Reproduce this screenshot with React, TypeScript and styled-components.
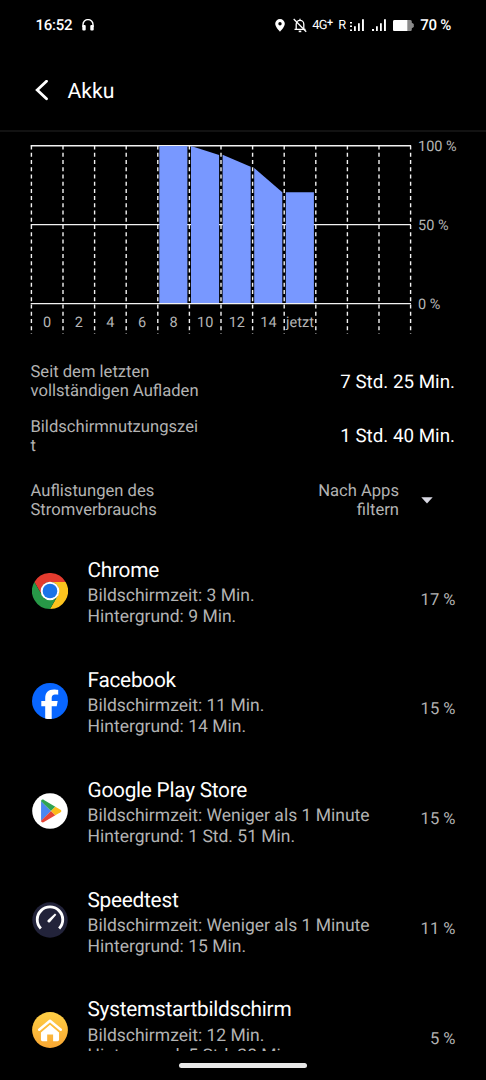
import React from "react";
import styled, { createGlobalStyle } from "styled-components";

const GlobalStyle = createGlobalStyle`
  * {
    box-sizing: border-box;
  }
  body {
    margin: 0;
    background: #000;
  }
  svg {
    display: block;
    flex: none;
  }
`;

const Screen = styled.div`
  display: flex;
  flex-direction: column;
  width: 486px;
  height: 1080px;
  overflow: hidden;
  background: #000;
  color: #fff;
  font-family: Roboto, sans-serif;
  text-rendering: geometricPrecision;
`;

const StatusBar = styled.div`
  display: flex;
  align-items: center;
  justify-content: space-between;
  height: 50px;
  padding: 0 35px 0 35.5px;
  font-size: 15px;
  font-weight: 500;
  letter-spacing: -0.25px;
`;

const StatusGroup = styled.div`
  display: flex;
  align-items: center;
`;

const Gap = styled.span<{ $size: number }>`
  width: ${({ $size }) => $size}px;
`;

const Network = styled.span<{ $width: number }>`
  width: ${({ $width }) => $width}px;
  font-size: 12.8px;
  font-weight: 400;
  letter-spacing: -0.5px;
  white-space: nowrap;
`;

const Plus = styled.span`
  font-size: 11px;
  font-weight: 500;
  line-height: 1;
  vertical-align: 2.5px;
`;

const Header = styled.header`
  display: flex;
  align-items: center;
  gap: 18.5px;
  height: 82px;
  padding: 0 0 0 35px;
  border-bottom: 2px solid #121212;
`;

const Title = styled.h1`
  margin: 0;
  padding-top: 2px;
  font-size: 21.2px;
  font-weight: 400;
`;

const Content = styled.main`
  height: 919px;
  overflow: hidden;
`;

const Chart = styled.svg`
  font-size: 14.5px;
  fill: #b5b5b5;
`;

const Summary = styled.div`
  display: flex;
  align-items: center;
  justify-content: space-between;
  padding: 0 31px 0 30.5px;
  height: 54.6px;
`;

const Label = styled.div<{ $width: number; $right?: boolean }>`
  width: ${({ $width }) => $width}px;
  padding-top: 2px;
  font-size: 16.6px;
  line-height: 19.3px;
  color: #b3b3b3;
  overflow-wrap: anywhere;
  text-align: ${({ $right }) => ($right ? "right" : "left")};
`;

const Value = styled.div`
  padding-top: 1px;
  font-size: 18.8px;
  line-height: 22px;
`;

const FilterBar = styled.div`
  display: flex;
  align-items: center;
  height: 54px;
  padding: 0 31px 0 30.5px;
  margin: 10px 0 9px;
`;

const Filter = styled.div`
  display: flex;
  align-items: center;
  gap: 22px;
  margin-left: auto;
  margin-right: 22px;
`;

const AppRow = styled.div`
  display: flex;
  align-items: center;
  height: 109.8px;
  padding: 0 30.5px 0 31.5px;
`;

const AppText = styled.div`
  flex: 1;
  margin-left: 20px;
  padding-top: 4px;
`;

const AppName = styled.div`
  font-size: 20.8px;
  line-height: 26px;
  margin-bottom: 2.2px;
  letter-spacing: -0.25px;
`;

const Detail = styled.div`
  font-size: 17.5px;
  line-height: 20.8px;
  color: #b3b3b3;
`;

const Percent = styled.div`
  font-size: 16.6px;
  line-height: 20px;
  color: #b3b3b3;
  margin-top: 19px;
`;

const NavArea = styled.div`
  display: flex;
  justify-content: center;
  padding-top: 12px;
`;

const NavHandle = styled.div`
  width: 128px;
  height: 5px;
  border-radius: 3px;
  background: #e8e8e8;
`;

const ChromeIcon = () => (
  <svg width="36" height="36" viewBox="0 0 48 48">
    <path d="M3.2 12A24 24 0 0 1 44.8 12H24A12 12 0 0 0 13.6 30Z" fill="#e33b2e" />
    <path d="M44.8 12A24 24 0 0 1 24 48L34.4 30A12 12 0 0 0 24 12Z" fill="#fcc31e" />
    <path d="M24 48A24 24 0 0 1 3.2 12L13.6 30A12 12 0 0 0 34.4 30Z" fill="#279847" />
    <circle cx="24" cy="24" r="12.4" fill="#fff" />
    <circle cx="24" cy="24" r="9.8" fill="#1a73e8" />
  </svg>
);

const FacebookIcon = () => (
  <svg width="36" height="36" viewBox="0 0 36 36">
    <circle cx="18" cy="18" r="18" fill="#0866ff" />
    <path
      d="M13.2 35.5V23.2H9.3V17.9h3.9v-2.6c0-6.1 3-8.9 8.8-8.9 1.3 0 3.1.2 4.2.5v4.8c-.5 0-1.3-.1-2.3-.1-3.3 0-4.2 1.2-4.2 4v2.3h6l-1 5.3h-5v12.7c-1.7.2-4.8.1-6.5-.4Z"
      fill="#fff"
    />
  </svg>
);

const PlayIcon = () => (
  <svg width="36" height="36" viewBox="0 0 37 37">
    <circle cx="18.5" cy="18.5" r="18.3" fill="#fff" />
    <path d="M9.3 8.2V28.8L19.6 18.5Z" fill="#4b87f0" />
    <path d="M9.3 8.5C9.3 7 11 6.4 12.3 7.1L24 14.1L19.6 18.5Z" fill="#30a352" />
    <path d="M9.3 28.5C9.3 30 11 30.6 12.3 29.9L24 22.9L19.6 18.5Z" fill="#e64435" />
    <path d="M24 14.1L29.3 17.2C30.4 17.9 30.4 19.1 29.3 19.8L24 22.9L19.6 18.5Z" fill="#fbbc1a" />
  </svg>
);

const SpeedtestIcon = () => (
  <svg width="36" height="36" viewBox="0 0 37 37">
    <circle cx="18.5" cy="18.5" r="18.2" fill="#22233a" />
    <path d="M9.1 27.3A13.1 13.1 0 1 1 27.9 27.3" fill="none" stroke="#fff" strokeWidth="2.9" />
    <path d="M16.3 18.5L23.6 11.7L25 13.1L18.4 20.7Q16.9 21.5 16 20.3Q15.5 19.2 16.3 18.5Z" fill="#fff" />
  </svg>
);

const HomeIcon = () => (
  <svg width="36" height="36" viewBox="0 0 37 37">
    <defs>
      <linearGradient id="home" x1="0" y1="0" x2="0" y2="1">
        <stop offset="0" stopColor="#ffcf45" />
        <stop offset="1" stopColor="#f9a733" />
      </linearGradient>
    </defs>
    <circle cx="18.5" cy="18.5" r="18.4" fill="url(#home)" />
    <path d="M7.4 18.2L18.5 9L29.6 18.2" fill="none" stroke="#fff" strokeWidth="2.6" strokeLinecap="round" strokeLinejoin="round" />
    <path d="M9.2 21L18.5 13.2L27.8 21V28.5Q27.8 30 26.3 30H21.7V23H15.6V30H10.7Q9.2 30 9.2 28.5Z" fill="#fff" />
    <path d="M8.8 20.2L18.5 12.2L28.2 20.2" fill="none" stroke="#fdbb3c" strokeWidth="0.9" />
  </svg>
);

const HeadphonesIcon = () => (
  <svg width="12" height="13" viewBox="0 0 12 13">
    <path d="M1 8V5.6a5 5 0 0 1 10 0v2.4" fill="none" stroke="#fff" strokeWidth="1.4" />
    <rect x="0.3" y="5.9" width="3.4" height="5.7" rx="1" fill="#fff" />
    <rect x="8.3" y="5.9" width="3.4" height="5.7" rx="1" fill="#fff" />
  </svg>
);

const PinIcon = () => (
  <svg width="10" height="13" viewBox="0 0 10 13">
    <path d="M5 0a4.8 4.8 0 0 0-4.8 4.8C.2 8 5 12.7 5 12.7S9.8 8 9.8 4.8A4.8 4.8 0 0 0 5 0Zm0 6.4a1.7 1.7 0 1 1 0-3.4 1.7 1.7 0 0 1 0 3.4Z" fill="#fff" />
  </svg>
);

const BellOffIcon = () => (
  <svg width="14" height="15" viewBox="0 0 14 15" fill="none" stroke="#fff" strokeWidth="1.3">
    <path d="M3.2 11V6.2A3.8 3.8 0 0 1 10.8 6.2V11M1.5 11.3H12.5M7 0.7V2.5" />
    <path d="M0.7 1L13.2 13.8" />
    <path d="M5.7 13.4H8.3" strokeWidth="1.6" />
  </svg>
);

const SignalIcon = ({ roaming }: { roaming?: boolean }) => (
  <svg width="14" height="13" viewBox="0 0 14 13" fill="#fff">
    {roaming ? (
      <path d="M0 3h2v1.5H0zM0 6.5h2V8H0zM0 10.5h2V12H0z" />
    ) : (
      <path d="M0 10h2v2H0z" />
    )}
    <path d="M4 7.3h1.8V12H4zM8 4.2h1.8V12H8zM12 0.3h1.9V12H12z" />
  </svg>
);

const BatteryIcon = () => (
  <svg width="21" height="11" viewBox="0 0 21 11">
    <path d="M1.5 0H17.5Q18.8 0 18.8 1.5V2.7L20.8 4V7L18.8 8.3V9.5Q18.8 11 17.5 11H1.5Q0 11 0 9.5V1.5Q0 0 1.5 0Z" fill="#8a8a8a" />
    <path d="M1.5 0H14.3V11H1.5Q0 11 0 9.5V1.5Q0 0 1.5 0Z" fill="#fff" />
  </svg>
);

const hours = ["0", "2", "4", "6", "8", "10", "12", "14", "jetzt"];

// battery level at both edges of each bar, as y in the chart
const bars = [
  { x: 159.3, left: 14, right: 14 },
  { x: 191, left: 14, right: 23 },
  { x: 222.6, left: 22.8, right: 34.8 },
  { x: 254.2, left: 36, right: 60.3 },
  { x: 285.8, left: 60.3, right: 60.3 },
];

const COL = 31.6;
const START = 31.4;

const BatteryChart = () => (
  <Chart width="486" height="222" viewBox="0 0 486 222">
    {[13.8, 92.6, 171.6].map((y) => (
      <path key={y} d={`M30.7 ${y}H411`} stroke="#f2f2f2" strokeWidth="1.4" />
    ))}
    {bars.map(({ x, left, right }) => (
      <path key={x} d={`M${x} ${left}L${x + 28.1} ${right}V170.9H${x}Z`} fill="#7898ff" />
    ))}
    {Array.from({ length: 13 }, (_, i) => (
      <path
        key={i}
        d={`M${START + COL * i} 13.5V202`}
        stroke="#f2f2f2"
        strokeWidth="1.4"
        strokeDasharray="4 3.23"
      />
    ))}
    {hours.map((hour, i) => (
      <text key={hour} x={START + COL * (i + 0.5)} y="195.2" textAnchor="middle">
        {hour}
      </text>
    ))}
    <text x="418" y="19.3">100 %</text>
    <text x="418" y="98.3">50 %</text>
    <text x="418" y="177">0 %</text>
  </Chart>
);

type AppData = {
  name: string;
  screen: string;
  background: string;
  percent: string;
  icon: React.ReactNode;
};

const APPS: AppData[] = [
  { name: "Chrome", screen: "3 Min.", background: "9 Min.", percent: "17 %", icon: <ChromeIcon /> },
  { name: "Facebook", screen: "11 Min.", background: "14 Min.", percent: "15 %", icon: <FacebookIcon /> },
  { name: "Google Play Store", screen: "Weniger als 1 Minute", background: "1 Std. 51 Min.", percent: "15 %", icon: <PlayIcon /> },
  { name: "Speedtest", screen: "Weniger als 1 Minute", background: "15 Min.", percent: "11 %", icon: <SpeedtestIcon /> },
  { name: "Systemstartbildschirm", screen: "12 Min.", background: "5 Std. 28 Min.", percent: "5 %", icon: <HomeIcon /> },
];

const App: React.FC = () => {
  return (
    <>
      <GlobalStyle />
      <Screen>
        <StatusBar>
          <StatusGroup>
            16:52
            <Gap $size={10} />
            <HeadphonesIcon />
          </StatusGroup>
          <StatusGroup>
            <PinIcon />
            <Gap $size={8} />
            <BellOffIcon />
            <Gap $size={5} />
            <Network $width={26}>
              4G<Plus>+</Plus>
            </Network>
            <Network $width={12}>R</Network>
            <SignalIcon roaming />
            <Gap $size={8} />
            <SignalIcon />
            <Gap $size={7} />
            <BatteryIcon />
            <Gap $size={6} />
            70 %
          </StatusGroup>
        </StatusBar>
        <Header>
          <svg width="14" height="21" viewBox="0 0 14 21">
            <path d="M11.5 1.2L2.2 10L11.5 18.8" fill="none" stroke="#fff" strokeWidth="2.8" strokeLinecap="round" />
          </svg>
          <Title>Akku</Title>
        </Header>
        <Content>
          <BatteryChart />
          <Summary>
            <Label $width={171}>Seit dem letzten vollständigen Aufladen</Label>
            <Value>7 Std. 25 Min.</Value>
          </Summary>
          <Summary>
            <Label $width={171}>Bildschirmnutzungszeit</Label>
            <Value>1 Std. 40 Min.</Value>
          </Summary>
          <FilterBar>
            <Label $width={140}>Auflistungen des Stromverbrauchs</Label>
            <Filter>
              <Label $width={100} $right>Nach Apps filtern</Label>
              <svg width="12" height="7" viewBox="0 0 12 7">
                <path d="M0.3 0.3H11.7L6 6.5Z" fill="#d9d9e3" />
              </svg>
            </Filter>
          </FilterBar>
          {APPS.map((item) => (
            <AppRow key={item.name}>
              {item.icon}
              <AppText>
                <AppName>{item.name}</AppName>
                <Detail>Bildschirmzeit: {item.screen}</Detail>
                <Detail>Hintergrund: {item.background}</Detail>
              </AppText>
              <Percent>{item.percent}</Percent>
            </AppRow>
          ))}
        </Content>
        <NavArea>
          <NavHandle />
        </NavArea>
      </Screen>
    </>
  );
};

export default App;
